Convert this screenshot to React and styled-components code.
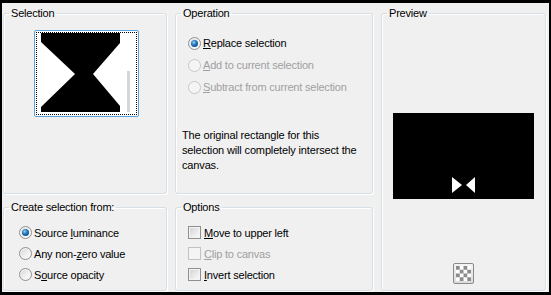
import React from 'react'
import styled, { createGlobalStyle } from 'styled-components'

const Global = createGlobalStyle`
  html, body {
    margin: 0;
    padding: 0;
    background: #000;
  }
`

const Frame = styled.div`
  width: 551px;
  height: 295px;
  box-sizing: border-box;
  border: 2px solid #000;
  border-top-width: 3px;
  border-bottom-width: 3px;
  background: #f0f0f0;
  padding: 3px 4px 1px 1px;
  display: grid;
  grid-template-columns: 164px 198px 165px;
  grid-template-rows: 188px 1fr;
  column-gap: 8px;
  row-gap: 6px;
  font-family: "Liberation Sans", Arial, sans-serif;
  font-size: 11px;
  color: #000;
`

const Group = styled.fieldset`
  margin: 0;
  padding: 0;
  min-width: 0;
  box-sizing: border-box;
  border: 1px solid #d5dfe5;
  border-radius: 3px;
  box-shadow: inset 1px 1px 0 #fff, 1px 1px 0 #fff;
  display: flex;
  flex-direction: column;
  grid-column: ${p => p.$col};
  grid-row: ${p => p.$row};
`

const Legend = styled.legend`
  margin-left: 5px;
  padding: 0 2px;
  height: 14px;
  line-height: 14px;
  letter-spacing: -0.2px;
`

const ThumbArea = styled.div`
  display: flex;
  justify-content: center;
  padding: 10px 0 0 3px;
`

const Thumb = styled.div`
  width: 105px;
  height: 87px;
  box-sizing: border-box;
  border: 1px solid #5aa3dc;
  border-radius: 2px;
  padding: 1px;
  background: #fff;
`

const ThumbInner = styled.div`
  width: 100%;
  height: 100%;
  box-sizing: border-box;
  border: 1px dotted #000;
  display: flex;
`

const Options = styled.div`
  display: flex;
  flex-direction: column;
  padding: ${p => p.$pad || '12px 0 0 12px'};
`

const Row = styled.label`
  display: flex;
  align-items: center;
  height: ${p => p.$h || 22}px;
  gap: ${p => p.$gap || 2}px;
  color: ${p => p.$disabled ? '#a0a0a0' : '#000'};
  letter-spacing: -0.2px;
  white-space: nowrap;
`

const Radio = styled.span`
  width: 13px;
  height: 13px;
  box-sizing: border-box;
  border-radius: 50%;
  border: 1px solid ${p => p.$disabled ? '#c6c6c6' : '#8e8f8f'};
  background: ${p => p.$disabled
    ? '#f4f4f4'
    : 'linear-gradient(135deg, #d6d6d6 0%, #f2f2f2 60%, #ffffff 100%)'};
  box-shadow: inset 0 0 0 1px ${p => p.$disabled ? '#f7f7f7' : '#f4f4f4'};
  display: flex;
  align-items: center;
  justify-content: center;
  flex: none;
`

const Dot = styled.span`
  width: 7px;
  height: 7px;
  border-radius: 50%;
  background: radial-gradient(circle at 40% 35%, #8fd3f5 0%, #1c6fb5 45%, #0b3a6f 100%);
`

const Check = styled.span`
  width: 13px;
  height: 13px;
  box-sizing: border-box;
  border: 1px solid ${p => p.$disabled ? '#c2c2c2' : '#8e8f8f'};
  background: ${p => p.$disabled
    ? '#f4f4f4'
    : 'linear-gradient(135deg, #d0d0d0 0%, #ececec 60%, #fafafa 100%)'};
  box-shadow: inset 0 0 0 1px #f4f4f4;
  flex: none;
`

const U = styled.span`
  text-decoration: underline;
  text-underline-offset: 1px;
`

const Note = styled.p`
  margin: 30px 0 0 6px;
  line-height: 15px;
  letter-spacing: -0.15px;
  white-space: nowrap;
`

const PreviewBody = styled.div`
  flex: 1;
  display: flex;
  flex-direction: column;
  align-items: center;
`

const PreviewImage = styled.div`
  margin-top: 93px;
  width: 141px;
  height: 86px;
  background: #000;
  display: flex;
`

const CheckerButton = styled.button`
  margin-top: auto;
  margin-bottom: 6px;
  width: 21px;
  height: 21px;
  box-sizing: border-box;
  padding: 2px;
  border: 1px solid #8a8a8a;
  border-radius: 2px;
  background: linear-gradient(#f4f4f4, #dcdcdc);
  display: flex;
`

const Checker = () => {
  const cells = []
  for (let r = 0; r < 4; r++) {
    for (let c = 0; c < 4; c++) {
      if ((r + c) % 2 === 0) cells.push(<rect key={r + '-' + c} x={c * 4} y={r * 4} width="4" height="4" fill="#8c8c8c" />)
    }
  }
  return (
    <svg width="15" height="15" viewBox="0 0 16 16">
      <rect width="16" height="16" fill="#fff" />
      {cells}
    </svg>
  )
}

export default function App() {
  return (
    <>
      <Global />
      <Frame>
        <Group $col="1" $row="1">
          <Legend>Selection</Legend>
          <ThumbArea>
            <Thumb>
              <ThumbInner>
                <svg width="99" height="81" viewBox="0 0 99 81">
                  <rect width="99" height="81" fill="#fff" />
                  <rect x="4" y="0" width="79" height="79" fill="#000" />
                  <polygon points="4,9 38,41 4,74" fill="#fff" />
                  <polygon points="83,10 56,41 83,73" fill="#fff" />
                  <rect x="90" y="38" width="3" height="41" fill="#d6d6d6" />
                </svg>
              </ThumbInner>
            </Thumb>
          </ThumbArea>
        </Group>

        <Group $col="2" $row="1">
          <Legend>Operation</Legend>
          <Options>
            <Row>
              <Radio><Dot /></Radio>
              <span><U>R</U>eplace selection</span>
            </Row>
            <Row $disabled>
              <Radio $disabled />
              <span><U>A</U>dd to current selection</span>
            </Row>
            <Row $disabled>
              <Radio $disabled />
              <span><U>S</U>ubtract from current selection</span>
            </Row>
          </Options>
          <Note>
            The original rectangle for this<br />
            selection will completely intersect the<br />
            canvas.
          </Note>
        </Group>

        <Group $col="3" $row="1 / span 2">
          <Legend>Preview</Legend>
          <PreviewBody>
            <PreviewImage>
              <svg width="141" height="86" viewBox="0 0 141 86">
                <polygon points="59,64 69,72 59,80" fill="#fff" />
                <polygon points="82,64 73,72 82,80" fill="#fff" />
              </svg>
            </PreviewImage>
            <CheckerButton type="button">
              <Checker />
            </CheckerButton>
          </PreviewBody>
        </Group>

        <Group $col="1" $row="2">
          <Legend>Create selection from:</Legend>
          <Options $pad="8px 0 0 15px">
            <Row $h={21}>
              <Radio><Dot /></Radio>
              <span>Source <U>l</U>uminance</span>
            </Row>
            <Row $h={21}>
              <Radio />
              <span>Any non-<U>z</U>ero value</span>
            </Row>
            <Row $h={21}>
              <Radio />
              <span>S<U>o</U>urce opacity</span>
            </Row>
          </Options>
        </Group>

        <Group $col="2" $row="2">
          <Legend>Options</Legend>
          <Options $pad="8px 0 0 12px">
            <Row $h={21} $gap={3}>
              <Check />
              <span><U>M</U>ove to upper left</span>
            </Row>
            <Row $h={21} $gap={3} $disabled>
              <Check $disabled />
              <span><U>C</U>lip to canvas</span>
            </Row>
            <Row $h={21} $gap={3}>
              <Check />
              <span><U>I</U>nvert selection</span>
            </Row>
          </Options>
        </Group>
      </Frame>
    </>
  )
}
